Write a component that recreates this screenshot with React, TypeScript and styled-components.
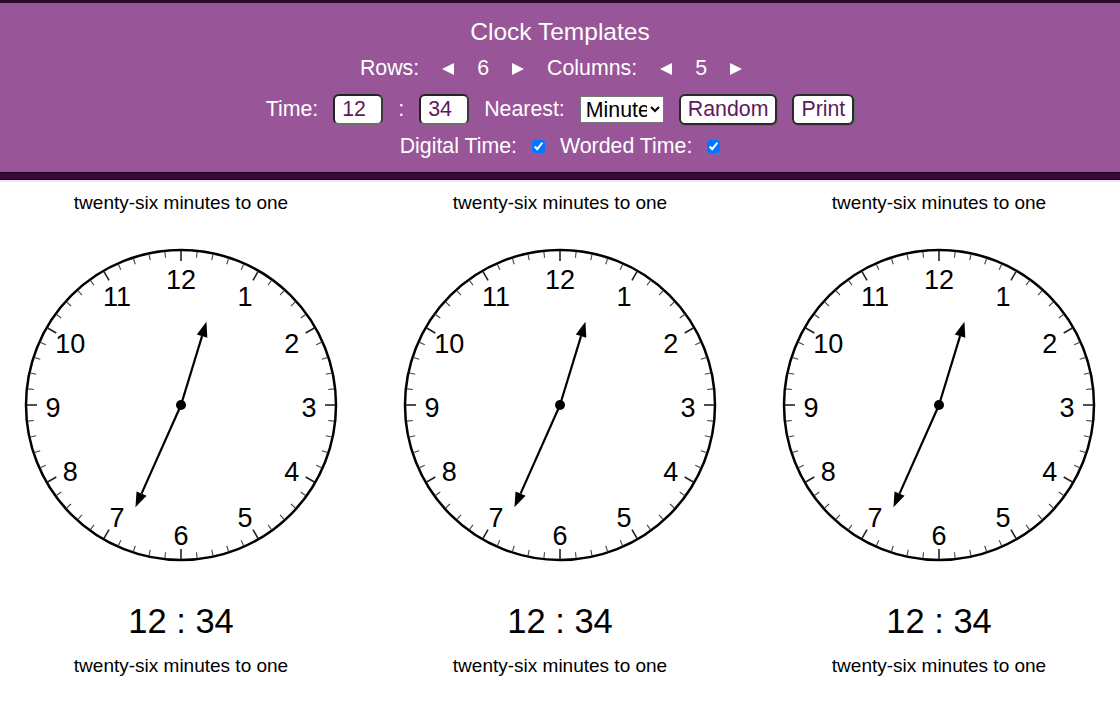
import React from 'react';
import styled, { createGlobalStyle } from 'styled-components';

const GlobalStyle = createGlobalStyle`
  html, body {
    margin: 0;
    padding: 0;
    background: #ffffff;
    overflow: hidden;
  }
  body {
    font-family: "Liberation Sans", Arial, sans-serif;
  }
`;

const ROWS = 6;
const COLUMNS = 5;
const HOURS = 12;
const MINUTES = 34;
const WORDED = 'twenty-six minutes to one';

const Header = styled.header`
  display: flex;
  flex-direction: column;
  align-items: center;
  padding: 15px 0 14px;
  background: #985597;
  border-top: 3px solid #2c0a2c;
  color: #ffffff;
  font-size: 21.33px;
  box-shadow: 0 1px 0 #1a001a, 0 7px 0 #3c083c, 0 8px 0 #1a001a, 0 10px 0 #ececec;
  position: relative;
  z-index: 1;
`;

const Title = styled.h1`
  margin: 0;
  font-size: 24.5px;
  font-weight: normal;
  line-height: 28px;
`;

const CountRow = styled.div`
  display: flex;
  align-items: center;
  gap: 23px;
  margin-top: 11px;
  height: 23px;
  padding-right: 18px;
`;

const TimeRow = styled.div`
  display: flex;
  align-items: center;
  gap: 15px;
  margin-top: 14px;
  height: 31px;
`;

const CheckRow = styled.div`
  display: flex;
  align-items: center;
  gap: 15px;
  margin-top: 10px;
  height: 23px;
`;

const Arrow = styled.button`
  display: flex;
  align-items: center;
  padding: 0;
  border: none;
  background: none;
  color: #ffffff;
  cursor: pointer;
`;

const TimeInput = styled.input`
  box-sizing: border-box;
  width: 50px;
  height: 31px;
  padding: 0 0 0 7px;
  border: 2px solid;
  border-color: #222222 #3a3a3a #6e6e6e #222222;
  border-radius: 6px;
  background: #ffffff;
  color: #5c1a5c;
  font-family: "Liberation Sans", Arial, sans-serif;
  font-size: 21.33px;
`;

const Select = styled.select`
  box-sizing: border-box;
  width: 84px;
  height: 27px;
  padding: 0 0 0 1px;
  border: 1px solid #767676;
  border-radius: 0;
  background: #ffffff;
  color: #000000;
  font-family: "Liberation Sans", Arial, sans-serif;
  font-size: 21.33px;
`;

const ActionButton = styled.button`
  box-sizing: border-box;
  height: 31px;
  padding: 0 7px;
  border: 2px solid #2a2a2a;
  border-radius: 6px;
  box-shadow: 1px 1px 0 #666;
  background: #ffffff;
  color: #5c1a5c;
  font-family: "Liberation Sans", Arial, sans-serif;
  font-size: 21.33px;
  cursor: pointer;
`;

const Check = styled.input`
  margin: 0;
  width: 13px;
  height: 13px;
`;

const Sheet = styled.main`
  display: grid;
  grid-template-columns: repeat(${COLUMNS}, 362px);
  column-gap: 17px;
  width: max-content;
`;

const Cell = styled.div`
  display: flex;
  flex-direction: column;
  align-items: center;
  padding-top: 20px;
  padding-bottom: 30px;
`;

const Worded = styled.div<{ $top?: number }>`
  font-size: 19px;
  line-height: 22px;
  color: #000000;
  margin-top: ${(p) => p.$top ?? 0}px;
`;

const Digital = styled.div`
  margin-top: 36px;
  font-size: 34.5px;
  line-height: 40px;
  color: #000000;
`;

const Face = styled.svg`
  display: block;
  margin-top: 31px;
`;

const Triangle = ({ dir }: { dir: 'left' | 'right' }) => (
  <svg width="12" height="12" viewBox="0 0 12 12">
    {dir === 'left' ? <polygon points="0,6 12,0 12,12" fill="#fff" /> : <polygon points="12,6 0,0 0,12" fill="#fff" />}
  </svg>
);

const C = 160;
const R = 155;

const polar = (r: number, deg: number) => {
  const a = (deg * Math.PI) / 180;
  return { x: C + r * Math.sin(a), y: C - r * Math.cos(a) };
};

const Hand = ({ length, deg }: { length: number; deg: number }) => {
  const tip = polar(length, deg);
  const base = polar(length - 15, deg);
  const a = (deg * Math.PI) / 180;
  const px = Math.cos(a) * 5.5;
  const py = Math.sin(a) * 5.5;
  return (
    <g>
      <line x1={C} y1={C} x2={base.x} y2={base.y} stroke="#000" strokeWidth={2.2} />
      <polygon
        points={`${tip.x},${tip.y} ${base.x + px},${base.y + py} ${base.x - px},${base.y - py}`}
        fill="#000"
      />
    </g>
  );
};

const Clock = ({ hours, minutes }: { hours: number; minutes: number }) => {
  const hourDeg = ((hours % 12) + minutes / 60) * 30;
  const minuteDeg = minutes * 6;
  return (
    <Face width={320} height={320} viewBox="0 0 320 320">
      <circle cx={C} cy={C} r={R} fill="#fff" stroke="#000" strokeWidth={2.5} />
      {Array.from({ length: 60 }, (_, i) => {
        const major = i % 5 === 0;
        const p1 = polar(R - 1, i * 6);
        const p2 = polar(major ? R - 11 : R - 7, i * 6);
        return (
          <line
            key={i}
            x1={p1.x}
            y1={p1.y}
            x2={p2.x}
            y2={p2.y}
            stroke={major ? '#222' : '#444'}
            strokeWidth={major ? 1.6 : 1.1}
          />
        );
      })}
      {Array.from({ length: 12 }, (_, i) => {
        const n = i + 1;
        const p = polar(128, n * 30);
        return (
          <text
            key={n}
            x={p.x}
            y={p.y + 2.5}
            textAnchor="middle"
            dominantBaseline="central"
            fontFamily='"Liberation Sans", Arial, sans-serif'
            fontSize={27}
            fill="#000"
          >
            {n}
          </text>
        );
      })}
      <Hand length={112} deg={minuteDeg} />
      <Hand length={87} deg={hourDeg} />
      <circle cx={C} cy={C} r={5} fill="#000" />
    </Face>
  );
};

export default function App() {
  const cells = Array.from({ length: ROWS * COLUMNS }, (_, i) => i);
  return (
    <>
      <GlobalStyle />
      <Header>
        <Title>Clock Templates</Title>
        <CountRow>
          <span>Rows:</span>
          <Arrow aria-label="fewer rows"><Triangle dir="left" /></Arrow>
          <span>{ROWS}</span>
          <Arrow aria-label="more rows"><Triangle dir="right" /></Arrow>
          <span>Columns:</span>
          <Arrow aria-label="fewer columns"><Triangle dir="left" /></Arrow>
          <span>{COLUMNS}</span>
          <Arrow aria-label="more columns"><Triangle dir="right" /></Arrow>
        </CountRow>
        <TimeRow>
          <span>Time:</span>
          <TimeInput defaultValue={String(HOURS)} />
          <span>:</span>
          <TimeInput defaultValue={String(MINUTES)} />
          <span>Nearest:</span>
          <Select defaultValue="minute">
            <option value="minute">Minute</option>
          </Select>
          <ActionButton>Random</ActionButton>
          <ActionButton>Print</ActionButton>
        </TimeRow>
        <CheckRow>
          <span>Digital Time:</span>
          <Check type="checkbox" defaultChecked />
          <span>Worded Time:</span>
          <Check type="checkbox" defaultChecked />
        </CheckRow>
      </Header>
      <Sheet>
        {cells.map((i) => (
          <Cell key={i}>
            <Worded>{WORDED}</Worded>
            <Clock hours={HOURS} minutes={MINUTES} />
            <Digital>
              {HOURS} : {MINUTES}
            </Digital>
            <Worded $top={14}>{WORDED}</Worded>
          </Cell>
        ))}
      </Sheet>
    </>
  );
}
